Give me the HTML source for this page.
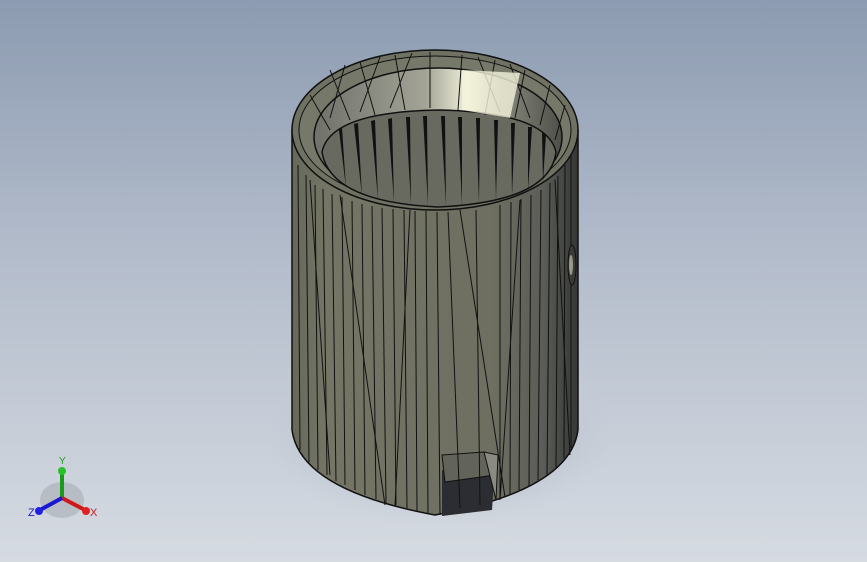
<!DOCTYPE html>
<html><head><meta charset="utf-8"><style>
html,body{margin:0;padding:0;width:867px;height:562px;overflow:hidden}
body{background:linear-gradient(#8c9bb1 0%,#b3bccb 45%,#d6dbe2 100%)}
svg{position:absolute;left:0;top:0}
</style></head><body>
<svg width="867" height="562" viewBox="0 0 867 562">
<defs>
<radialGradient id="sh" cx="0.5" cy="0.5" r="0.5"><stop offset="0" stop-color="#8a919c" stop-opacity=".8"/><stop offset="1" stop-color="#b8bfca" stop-opacity="0"/></radialGradient>
<linearGradient id="body" x1="0" x2="1"><stop offset="0" stop-color="#66685a"/><stop offset=".12" stop-color="#747565"/><stop offset=".7" stop-color="#6e6f61"/><stop offset=".88" stop-color="#5a5c57"/><stop offset="1" stop-color="#353734"/></linearGradient>
<linearGradient id="inner" x1="0" x2="1"><stop offset="0" stop-color="#6f716a"/><stop offset=".45" stop-color="#a3a496"/><stop offset=".62" stop-color="#efefd8"/><stop offset=".75" stop-color="#8a8b7e"/><stop offset="1" stop-color="#4d4f49"/></linearGradient>
</defs>
<ellipse cx="440" cy="440" rx="175" ry="85" fill="url(#sh)"/>
<path d="M292,130 L292,430 Q300,490 435,515 Q570,490 578,430 L578,130 Z" fill="url(#body)" stroke="#111" stroke-width="1.5"/>
<path d="M442,470 L442,516 L492,510 L495,465 Z" fill="#2c2d32"/>
<path d="M442,455 L484,452 L495,472 L488,476 L445,482 Z" fill="#62635a" stroke="#111"/>
<path d="M484,452 L498,455 L496,500 Z" fill="#8a8a80" stroke="#111"/>
<g stroke="#111" stroke-width="1" fill="none">
<path d="M298,165 L300,450 M306,175 L309,462 M315,185 L318,470 M323,189 L327,475 M332,194 L336,481 M342,197 L345,485 M352,201 L355,490 M362,204 L365,495 M372,206 L376,499 M382,208 L386,503 M393,209 L396,505 M404,210 L407,508 M415,211 L417,511 M426,211 L428,513 M437,212 L440,515 M500,205 L500,498 M511,202 L510,494 M521,199 L519,490 M531,195 L529,486 M541,190 L538,480 M550,183 L547,475 M558,176 L556,468 M565,165 L564,458 M571,152 L571,448"/>
<path d="M340,195 L385,505 M410,210 L395,506 M460,210 L505,497 M520,200 L500,500 M555,180 L570,455 M310,180 L330,475 M448,212 L460,508 M476,210 L480,505"/>
</g>
<ellipse cx="435" cy="130" rx="143" ry="80" fill="#6f7163" stroke="#111" stroke-width="1.5"/>
<ellipse cx="435" cy="130" rx="136" ry="74" fill="#767869" stroke="#111"/>
<ellipse cx="438" cy="137" rx="124" ry="69" fill="url(#inner)" stroke="#111" stroke-width="1.5"/>
<path d="M322,152 Q330,112 438,110 Q547,112 556,152 Q550,202 438,207 Q330,202 322,152 Z" fill="#686a60" stroke="#111" stroke-width="1.5"/>
<g fill="#111">
<path d="M342,128 L346,188 L339,130Z M358,123 L362,196 L354,124Z M375,120 L378,200 L371,121Z M392,118 L394,203 L388,119Z M410,117 L411,205 L406,117Z M427,116 L428,206 L423,116Z M445,116 L446,206 L441,116Z M462,117 L462,205 L458,117Z M480,118 L479,203 L476,118Z M498,120 L496,200 L494,120Z M515,123 L512,196 L511,123Z M532,127 L528,190 L528,127Z M546,134 L543,182 L542,133Z"/>
</g>
<g stroke="#111" stroke-width="1">
<path d="M330,70 L350,120 M360,62 L375,115 M395,55 L405,110 M430,52 L430,108 M462,55 L458,110 M495,60 L485,115 M525,70 L515,118 M550,85 L540,125 M310,95 L330,130 M565,105 L555,140 M345,65 L330,118 M380,57 L360,112 M412,53 L390,108 M478,57 L500,112 M510,64 L530,118"/>
</g>
<path d="M462,70 L520,73 L510,118 L462,110 Z" fill="#f4f4dc" opacity=".8"/>
<ellipse cx="572" cy="265" rx="4" ry="20" fill="#3a3b37" stroke="#111"/>
<ellipse cx="571" cy="265" rx="2" ry="10" fill="#9a9a8c"/>
</svg>
<svg width="867" height="562" viewBox="0 0 867 562">
<ellipse cx="62" cy="500" rx="22" ry="18" fill="#a9adb4" opacity=".6"/>
<line x1="62" y1="498" x2="62" y2="472" stroke="#1a9a1a" stroke-width="4"/>
<circle cx="62" cy="471" r="4" fill="#2ac02a"/>
<line x1="62" y1="498" x2="85" y2="510" stroke="#d01818" stroke-width="4"/>
<circle cx="86" cy="511" r="4" fill="#e02020"/>
<line x1="62" y1="498" x2="40" y2="510" stroke="#1818d0" stroke-width="4"/>
<circle cx="39" cy="511" r="4" fill="#2020e0"/>
<text x="59" y="464" font-family="Liberation Sans,sans-serif" font-size="10" fill="#1aa01a">Y</text>
<text x="90" y="516" font-family="Liberation Sans,sans-serif" font-size="11" fill="#d01818">X</text>
<text x="28" y="516" font-family="Liberation Sans,sans-serif" font-size="11" fill="#1818c0">Z</text>
</svg>
</body></html>
